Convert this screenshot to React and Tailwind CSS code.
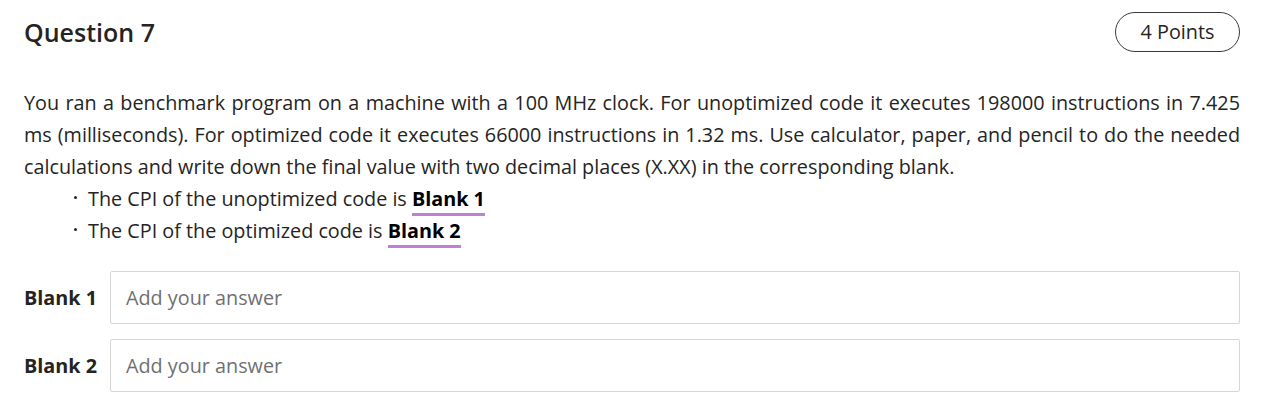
import React from 'react';

function BlankRef({ label }) {
  return (
    <span className="font-bold text-black border-b-[3px] border-[#bd82d8] pb-[1px]">{label}</span>
  );
}

function AnswerRow({ label }) {
  return (
    <div className="flex items-center">
      <div className="w-[86px] shrink-0 text-[19.8px] font-bold text-[#252423]">{label}</div>
      <input
        type="text"
        placeholder="Add your answer"
        className="flex-1 h-[53px] rounded-[2px] border border-[#d6d6d6] bg-white px-[15px] text-[19.8px] text-[#252423] placeholder:text-[#707070] outline-none"
      />
    </div>
  );
}

function Bullet({ children }) {
  return (
    <li className="flex">
      <div className="w-[14px] h-[32px] flex items-center">
        <span className="block w-[3px] h-[3px] mb-[3px] rounded-full bg-[#252423]" />
      </div>
      <span>{children}</span>
    </li>
  );
}

export default function App() {
  return (
    <div className="min-h-[407px] bg-white pl-6 pr-10 pt-3 font-['Open_Sans',sans-serif] text-[#252423]">
      {/* Header */}
      <div className="flex items-center justify-between h-10">
        <h2 className="text-[25px] font-semibold leading-none">Question 7</h2>
        <div className="h-10 w-[125px] flex items-center justify-center rounded-full border border-[#3b3a39] text-[19.8px]">
          4 Points
        </div>
      </div>

      {/* Body */}
      <div className="mt-[35px] text-[19.8px] leading-[32px]">
        <p className="text-justify">
          You ran a benchmark program on a machine with a 100 MHz clock. For unoptimized code it executes 198000 instructions in 7.425
          ms (milliseconds). For optimized code it executes 66000 instructions in 1.32 ms. Use calculator, paper, and pencil to do the needed
          calculations and write down the final value with two decimal places (X.XX) in the corresponding blank.
        </p>
        <ul className="pl-[50px]">
          <Bullet>The CPI of the unoptimized code is <BlankRef label="Blank 1" /></Bullet>
          <Bullet>The CPI of the optimized code is <BlankRef label="Blank 2" /></Bullet>
        </ul>
      </div>

      {/* Answers */}
      <div className="mt-6 flex flex-col gap-[15px]">
        <AnswerRow label="Blank 1" />
        <AnswerRow label="Blank 2" />
      </div>
    </div>
  );
}
